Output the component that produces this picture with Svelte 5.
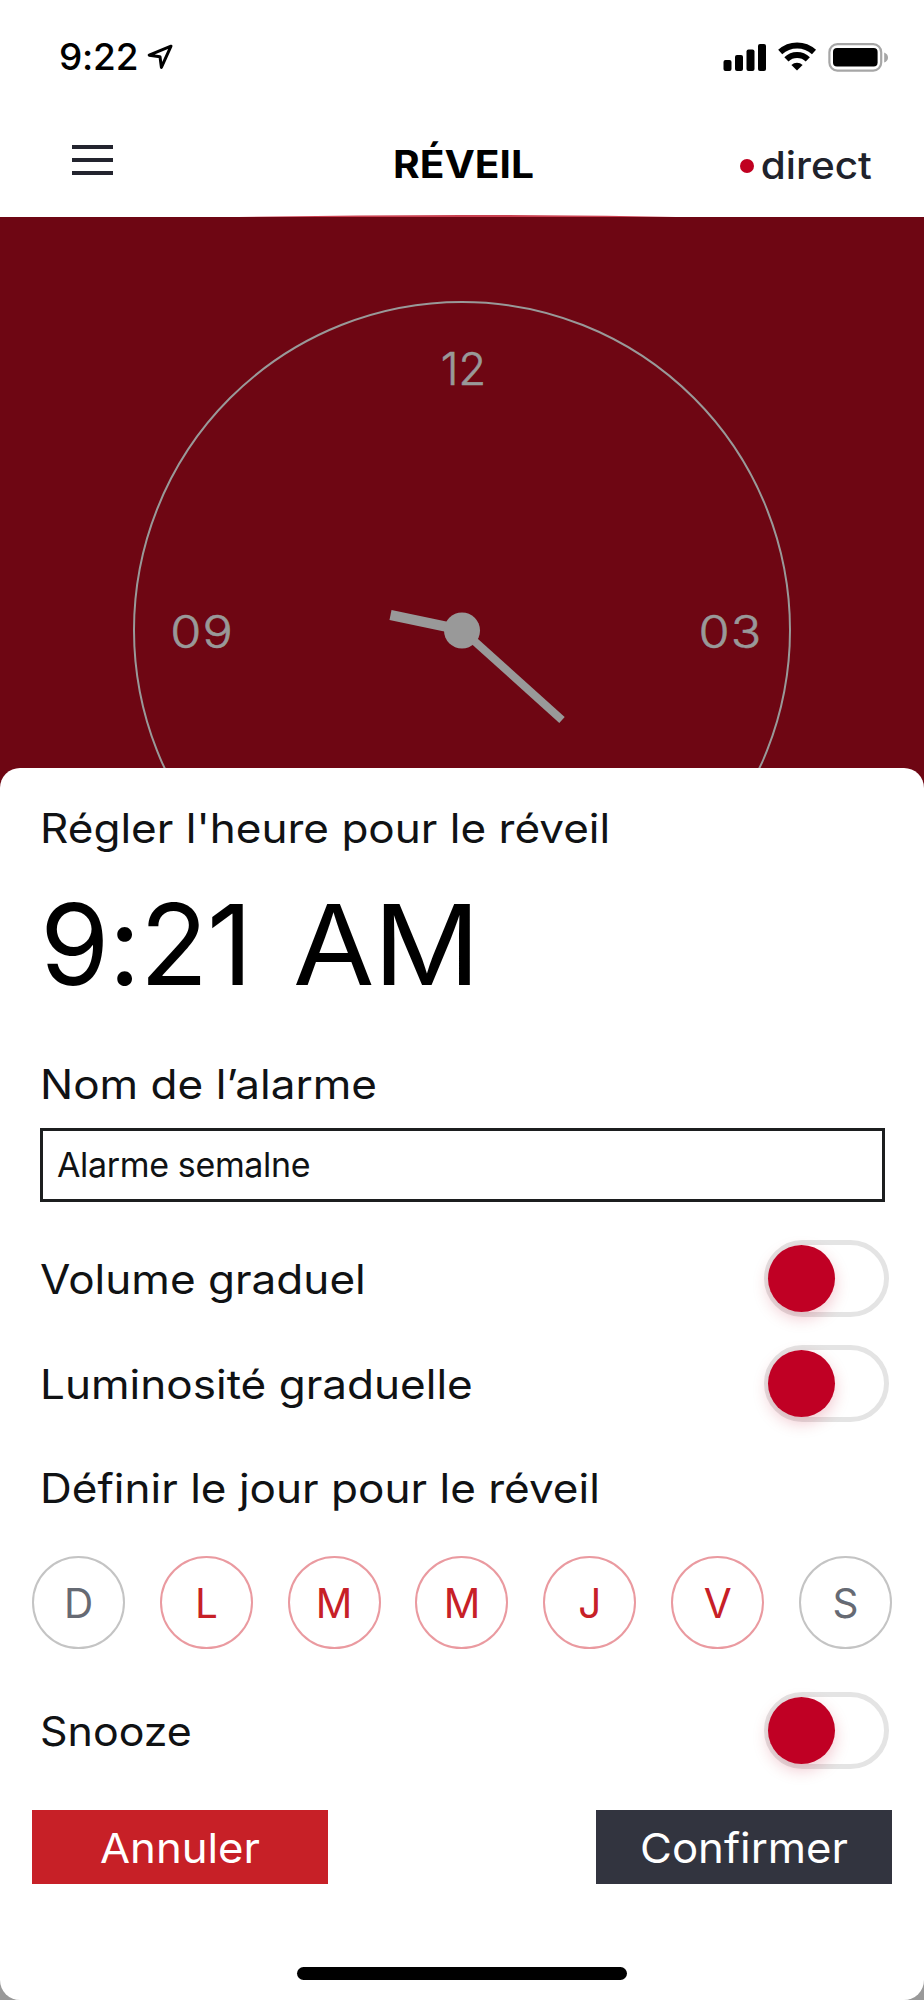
<script>
  let alarmName = $state('Alarme semalne')

  let days = $state([
    { letter: 'D', active: false },
    { letter: 'L', active: true },
    { letter: 'M', active: true },
    { letter: 'M', active: true },
    { letter: 'J', active: true },
    { letter: 'V', active: true },
    { letter: 'S', active: false }
  ])

  let volume = $state(false)
  let brightness = $state(false)
  let snooze = $state(false)
</script>

{#snippet toggle(on, flip, label)}
  <button class="toggle" class:on aria-label={label} onclick={flip}>
    <i class="knob"></i>
  </button>
{/snippet}

<main>
  <div class="status">
    <span class="clock">9:22</span>
    <svg class="location" width="26" height="26" viewBox="0 0 26 26">
      <path d="M24 2.2 L2.2 11.2 L13 12.8 L14.4 23.4 Z" />
    </svg>
    <svg class="signals" width="168" height="32" viewBox="0 0 168 32">
      <rect x="1.5" y="19" width="8" height="11" rx="2" />
      <rect x="13" y="14" width="8" height="16" rx="2" />
      <rect x="24.5" y="8.5" width="8" height="21.5" rx="2" />
      <rect x="36" y="3" width="8" height="27" rx="2" />
      <g class="waves">
        <path d="M58.2 11 A25 25 0 0 1 92 11" />
        <path d="M64.4 18.4 A15.5 15.5 0 0 1 85.8 18.4" />
      </g>
      <path d="M75 29.6 L69.4 24 A8.4 8.4 0 0 1 80.6 24 Z" />
      <rect class="shell" x="107.4" y="3.2" width="51.8" height="26.4" rx="8" />
      <rect x="111" y="7" width="44.6" height="18.6" rx="4" />
      <path class="tip" d="M162.2 11.5 Q166 13 166 16.5 Q166 20 162.2 21.5 Z" />
    </svg>
  </div>

  <header>
    <button class="menu" aria-label="Menu">
      <span></span>
      <span></span>
      <span></span>
    </button>
    <h1>RÉVEIL</h1>
    <div class="live"><i></i><span>direct</span></div>
  </header>

  <section class="hero">
    <svg width="924" height="585" viewBox="0 215 924 585">
      <path class="glow" d="M220 217.5 Q462 212.5 704 217.5 Z" />
      <rect class="shade" x="0" y="217" width="924" height="583" />
      <circle class="dial" cx="462" cy="630" r="328" />
      <text x="463.5" y="384.5">12</text>
      <text class="wide" x="202" y="648">09</text>
      <text class="wide" x="730.5" y="648">03</text>
      <line x1="462" y1="630" x2="390.5" y2="615" stroke-width="10" />
      <line x1="462" y1="630" x2="562" y2="720" stroke-width="8" />
      <circle class="pin" cx="462" cy="630.5" r="18" />
    </svg>
  </section>

  <section class="sheet">
    <h2>Régler l'heure pour le réveil</h2>
    <div class="time">9:21 <span>AM</span></div>

    <label for="name">Nom de l’alarme</label>
    <input id="name" bind:value={alarmName} />

    <div class="row">
      <span>Volume graduel</span>
      {@render toggle(volume, () => (volume = !volume), 'Volume graduel')}
    </div>
    <div class="row">
      <span>Luminosité graduelle</span>
      {@render toggle(brightness, () => (brightness = !brightness), 'Luminosité graduelle')}
    </div>

    <h2 class="daysTitle">Définir le jour pour le réveil</h2>
    <div class="days">
      {#each days as day}
        <button class:active={day.active} onclick={() => (day.active = !day.active)}>{day.letter}</button>
      {/each}
    </div>

    <div class="row last">
      <span>Snooze</span>
      {@render toggle(snooze, () => (snooze = !snooze), 'Snooze')}
    </div>

    <div class="actions">
      <button class="cancel"><span>Annuler</span></button>
      <button class="confirm"><span>Confirmer</span></button>
    </div>

    <div class="home"></div>
  </section>
</main>

<style>
  :global(body) {
    background: #999;
  }

  * {
    box-sizing: border-box;
    margin: 0;
    padding: 0;
  }

  main {
    width: 924px;
    height: 2000px;
    overflow: hidden;
    font-family: Inter, 'Liberation Sans', sans-serif;
    color: #000;
  }

  button {
    border: 0;
    background: none;
    font-family: inherit;
    cursor: pointer;
  }

  .status {
    display: flex;
    height: 114px;
    padding: 0 34px 0 59px;
    background: #fff;
  }
  .clock {
    width: 88px;
    font-size: 37px;
    font-weight: 500;
    line-height: 114px;
    letter-spacing: -0.2px;
  }
  .location {
    margin-top: 44px;
    fill: none;
    stroke: #000;
    stroke-width: 3;
    stroke-linejoin: round;
  }
  .signals {
    margin: 41px 0 0 auto;
  }
  .waves {
    fill: none;
    stroke: #000;
    stroke-width: 6;
  }
  .shell {
    fill: none;
    stroke: #a6a6a6;
    stroke-width: 2.2;
  }
  .tip {
    fill: #a6a6a6;
  }

  header {
    display: grid;
    grid-template-columns: 1fr 160px 1fr;
    height: 101px;
    padding: 0 52px 0 72px;
    background: #fff;
  }
  .menu {
    display: flex;
    flex-direction: column;
    gap: 9.5px;
    width: 41px;
    height: 30px;
    margin-top: 31px;
  }
  .menu span {
    height: 3.5px;
    background: #23242e;
  }
  h1 {
    margin-left: -17px;
    font-size: 38px;
    line-height: 101px;
    font-weight: 700;
    text-align: center;
    transform: scaleX(1.07);
  }
  .live {
    display: flex;
    align-items: center;
    justify-content: flex-end;
    gap: 7px;
    height: 103px;
    font-size: 37.5px;
    font-weight: 500;
    color: #20222b;
  }
  .live span {
    transform: scaleX(1.08);
    transform-origin: right;
  }
  .live i {
    width: 14px;
    height: 14px;
    margin-right: 8px;
    border-radius: 50%;
    background: #c00020;
  }

  .hero {
    height: 585px;
    background: #fff;
  }
  .hero svg {
    display: block;
  }
  .shade {
    fill: #6e0613;
  }
  .glow {
    fill: #c9404f;
  }
  .dial {
    fill: none;
    stroke: #999;
    stroke-width: 2;
  }
  .pin {
    fill: #999;
  }
  .hero line {
    stroke: #999;
  }
  .hero text {
    font-size: 45px;
    font-weight: 300;
    text-anchor: middle;
    fill: #999;
    stroke: #999;
    stroke-width: 0.6;
  }
  .hero .wide {
    letter-spacing: 1px;
    transform: scaleX(1.12);
    transform-box: fill-box;
    transform-origin: center;
  }

  .sheet {
    position: relative;
    display: flex;
    flex-direction: column;
    height: 1232px;
    margin-top: -32px;
    padding: 37px 32px 0;
    border-radius: 20px;
    background: #fff;
  }
  /* widened a little, the labels are set in a broad geometric face */
  h2,
  label,
  .row span {
    font-size: 40.5px;
    font-weight: 400;
    line-height: 48px;
    color: #101214;
    white-space: nowrap;
    transform: scaleX(1.088);
    transform-origin: left;
  }
  h2,
  label {
    margin-left: 8px;
  }
  .time {
    padding-left: 8px;
    margin-top: 31px;
    font-size: 112px;
    line-height: 120px;
    font-weight: 400;
    letter-spacing: -1px;
    word-spacing: 11px;
  }
  .time span {
    display: inline-block;
    transform: scaleX(1.055);
    transform-origin: left;
  }
  label {
    margin-top: 57px;
  }
  input {
    width: 845px;
    height: 74px;
    margin: 19px 0 0 8px;
    padding: 0 14px 2px;
    border: 3px solid #1c1e1f;
    border-radius: 0;
    font-family: inherit;
    font-size: 34px;
    letter-spacing: -0.35px;
    color: #101214;
    outline: none;
  }
  .row {
    display: flex;
    justify-content: space-between;
    align-items: center;
    height: 77px;
    margin-top: 28px;
    padding: 0 3px 0 8px;
  }
  .row span {
    padding-top: 2px;
  }
  input + .row {
    margin-top: 38px;
  }
  .toggle {
    display: flex;
    width: 125px;
    height: 77px;
    border: 5px solid #e4e4e4;
    border-radius: 39px;
  }
  .toggle.on {
    justify-content: flex-end;
  }
  .knob {
    width: 67px;
    height: 67px;
    margin: 0 -1px;
    border-radius: 50%;
    background: #c00024;
    box-shadow: 0 6px 16px rgba(192, 0, 36, 0.22);
  }
  .daysTitle {
    margin-top: 43px;
  }

  .days {
    display: flex;
    justify-content: space-between;
    margin-top: 43px;
  }
  .days button {
    width: 93px;
    height: 93px;
    border: 2px solid #c4c4c4;
    border-radius: 50%;
    font-size: 40.5px;
    line-height: 91px;
    color: #666a73;
  }
  .days .active {
    border-color: #ea9aa0;
    color: #c72027;
  }
  .last {
    margin-top: 43px;
  }
  .last span {
    transform: scaleX(1.06);
  }

  .actions {
    display: flex;
    justify-content: space-between;
    margin-top: 41px;
  }
  .actions button {
    width: 296px;
    height: 74px;
    font-size: 41px;
    line-height: 74px;
    color: #fff;
  }
  .actions span {
    display: block;
    padding-top: 1px;
    transform: scaleX(1.065);
  }
  .cancel {
    background: #c72027;
  }
  .confirm {
    background: #32343f;
  }

  .home {
    width: 330px;
    height: 13px;
    margin: 83px auto 0;
    border-radius: 7px;
    background: #000;
  }
</style>
